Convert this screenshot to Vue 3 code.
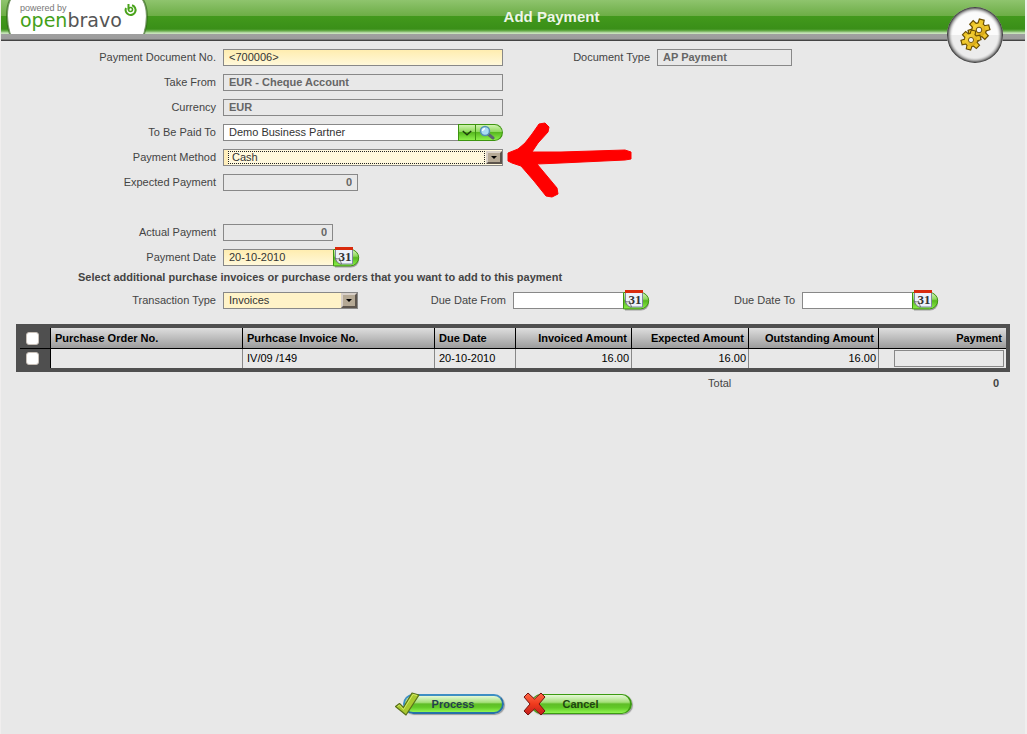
<script setup>
import { ref, computed } from "vue";

const payment = ref({
  documentNo: "<700006>",
  documentType: "AP Payment",
  takeFrom: "EUR - Cheque Account",
  currency: "EUR",
  paidTo: "Demo Business Partner",
  method: "Cash",
  expected: "0",
  actual: "0",
  date: "20-10-2010",
});

const filters = ref({
  type: "Invoices",
  dueFrom: "",
  dueTo: "",
});

const methods = ["Cash", "Cheque", "Wire Transfer"];
const types = ["Invoices", "Orders"];

const rows = ref([
  {
    id: 1,
    orderNo: "",
    invoiceNo: "IV/09 /149",
    dueDate: "20-10-2010",
    invoiced: "16.00",
    expected: "16.00",
    outstanding: "16.00",
    payment: "",
    selected: false,
  },
]);

// Sum of the amounts typed in the grid
const total = computed(() =>
  rows.value.reduce((sum, row) => sum + (Number(row.payment) || 0), 0)
);

const allSelected = computed({
  get: () => rows.value.every((row) => row.selected),
  set: (value) => rows.value.forEach((row) => (row.selected = value)),
});

// Teeth of the gear icon, as angles in degrees
const teeth = [0, 60, 120, 180, 240, 300];
</script>

<template>
  <form class="popup" @submit.prevent>
    <svg width="0" height="0" class="defs" aria-hidden="true">
      <defs>
        <linearGradient id="pill" x1="0" y1="0" x2="0" y2="1">
          <stop offset="0" stop-color="#d8f5bd" />
          <stop offset="0.4" stop-color="#8fd95c" />
          <stop offset="0.5" stop-color="#57b81f" />
          <stop offset="1" stop-color="#8cf04a" />
        </linearGradient>
        <symbol id="calendar" viewBox="0 0 27 21">
          <path d="M1 3.5h16a8 8 0 0 1 0 16H1z" fill="#555" opacity="0.5" transform="translate(1 1)" />
          <path d="M0.5 2.5h17a8.2 8.2 0 0 1 0 16.4h-17z" fill="url(#pill)" stroke="#3d9410" />
          <path d="M2.5 1h17v16h-12l-5-4z" fill="#edf1fa" stroke="#7d87a0" />
          <path d="M2.500 11c1 1 3 1 4 0l2 6c-3 0-5-2-6-6z" fill="#dfe5f2" stroke="#555" stroke-width="0.7" />
          <path d="M2 0h18v3H2z" fill="#d92a0c" />
          <text x="12" y="14" text-anchor="middle" class="calendar-day">31</text>
        </symbol>
      </defs>
    </svg>

    <!-- Title bar -->
    <header class="header">
      <div class="logo">
        <svg class="logo-shape" viewBox="0 0 142 34" width="142" height="34" aria-hidden="true">
          <path d="M4 0C0 8 0 22 4 34h134c4-12 4-26-1-34z" fill="#fff" stroke="#2c5d14" stroke-width="2" stroke-opacity="0.6" />
          <path d="M5 0C2 9 2 23 5 34h132c3-11 3-25-1-34z" fill="#fff" />
          <g fill="none" stroke="#4aa31c" stroke-width="2">
            <path d="M126 5.200A5 5 0 1 1 120 8" />
            <path d="M122.500 4v5.500" />
            <circle cx="124.500" cy="9.500" r="2" stroke-width="1.600" />
          </g>
        </svg>
        <span class="logo-powered">powered by</span>
        <span class="logo-name"><b>open</b>bravo</span>
      </div>
      <h1 class="title">Add Payment</h1>
      <div class="emblem">
        <svg viewBox="0 0 60 60" width="60" height="60" aria-hidden="true">
          <defs>
            <radialGradient id="rim">
              <stop offset="0.78" stop-color="#fff" stop-opacity="0" />
              <stop offset="0.9" stop-color="#999" stop-opacity="0.7" />
              <stop offset="1" stop-color="#222" />
            </radialGradient>
            <linearGradient id="gold" x1="0" y1="0" x2="1" y2="1">
              <stop offset="0" stop-color="#ffe34d" />
              <stop offset="1" stop-color="#d49d08" />
            </linearGradient>
            <g id="gear">
              <g fill="#e9bd1d" stroke="#6b5005" stroke-width="1.600">
                <path v-for="a in teeth" :key="a" d="M-2.600-6l.3-4.500h4.600l.3 4.500z" :transform="`rotate(${a + 15})`" />
                <circle r="7" />
              </g>
              <path v-for="a in teeth" :key="'f' + a" d="M-2.200-5l.3-5h3.800l.3 5z" fill="#edc528" :transform="`rotate(${a + 15})`" />
              <circle r="6.600" fill="url(#gold)" />
              <circle r="2.800" fill="#f4f4f4" stroke="#6b5005" />
            </g>
          </defs>
          <circle cx="30" cy="30" r="28" fill="#fbfbfb" />
          <path d="M2 30a28 28 0 0 0 56 0z" fill="#ececec" />
          <circle cx="30" cy="30" r="28" fill="url(#rim)" />
          <use href="#gear" transform="translate(34 25)" />
          <use href="#gear" transform="translate(26 35) scale(0.920)" />
        </svg>
      </div>
    </header>

    <!-- Payment data -->
    <div class="row">
      <label for="documentNo" class="label c1">Payment Document No.</label>
      <div class="field c2 wide">
        <input id="documentNo" v-model="payment.documentNo" type="text" class="input required" />
      </div>
      <label for="documentType" class="label c4">Document Type</label>
      <div class="field c5 medium">
        <input id="documentType" :value="payment.documentType" type="text" class="input readonly" readonly />
      </div>
    </div>
    <div class="row">
      <label for="takeFrom" class="label c1">Take From</label>
      <div class="field c2 wide">
        <input id="takeFrom" :value="payment.takeFrom" type="text" class="input readonly" readonly />
      </div>
    </div>
    <div class="row">
      <label for="currency" class="label c1">Currency</label>
      <div class="field c2 wide">
        <input id="currency" :value="payment.currency" type="text" class="input readonly" readonly />
      </div>
    </div>
    <div class="row">
      <label for="paidTo" class="label c1">To Be Paid To</label>
      <div class="field c2 wide">
        <input id="paidTo" v-model="payment.paidTo" type="text" class="input open" />
        <button type="button" class="lookup" aria-label="Show list">
          <svg viewBox="0 0 17 15" width="17" height="15">
            <path d="M4 6l4.500 4L13 6" fill="none" stroke="#1d3d0c" stroke-width="1.500" />
          </svg>
        </button>
        <button type="button" class="lookup last" aria-label="Search">
          <svg viewBox="0 0 26 15" width="26" height="15">
            <path d="M12 9l5 4" stroke="#5c6470" stroke-width="3" stroke-linecap="round" />
            <circle cx="9" cy="6" r="4.500" fill="#a9dcf5" stroke="#5590b5" stroke-width="1.500" />
            <path d="M6.500 6A3 3 0 0 1 9 3.500" fill="none" stroke="#fff" stroke-width="1.500" />
          </svg>
        </button>
      </div>
    </div>
    <div class="row">
      <label for="method" class="label c1">Payment Method</label>
      <div class="field c2 wide">
        <div class="select focused">
          <select id="method" v-model="payment.method">
            <option v-for="m in methods" :key="m">{{ m }}</option>
          </select>
          <span class="arrow"></span>
        </div>
        <svg class="pointer" viewBox="0 0 126 78" width="126" height="78" aria-hidden="true">
          <path
            d="M1 32L11 28 18 22 25 13 32 3 38 2 42 6 41 11 31 22 25 31 54 31 118 29 124 31 124 38 118 39 54 42 30 43 50 67 51 73 45 76 39 75 27 60 14 45 5 42 1 40z"
            fill="red"
            stroke="red"
            stroke-linejoin="round"
          />
        </svg>
      </div>
    </div>
    <div class="row">
      <label for="expected" class="label c1">Expected Payment</label>
      <div class="field c2 medium">
        <input id="expected" :value="payment.expected" type="text" class="input readonly number" readonly />
      </div>
    </div>
    <div class="row"></div>
    <div class="row">
      <label for="actual" class="label c1">Actual Payment</label>
      <div class="field c2 short">
        <input id="actual" :value="payment.actual" type="text" class="input readonly number" readonly />
      </div>
    </div>
    <div class="row">
      <label for="date" class="label c1">Payment Date</label>
      <div class="field c2 date">
        <input id="date" v-model="payment.date" type="text" class="input required open" />
        <button type="button" class="calendar" aria-label="Calendar">
          <svg width="27" height="21"><use href="#calendar" /></svg>
        </button>
      </div>
    </div>

    <!-- Filters -->
    <p class="note">Select additional purchase invoices or purchase orders that you want to add to this payment</p>
    <div class="row">
      <label for="type" class="label c1">Transaction Type</label>
      <div class="field c2 medium">
        <div class="select">
          <select id="type" v-model="filters.type">
            <option v-for="t in types" :key="t">{{ t }}</option>
          </select>
          <span class="arrow"></span>
        </div>
      </div>
      <label for="dueFrom" class="label c3">Due Date From</label>
      <div class="field c4 date">
        <input id="dueFrom" v-model="filters.dueFrom" type="text" class="input open" />
        <button type="button" class="calendar" aria-label="Calendar">
          <svg width="27" height="21"><use href="#calendar" /></svg>
        </button>
      </div>
      <label for="dueTo" class="label c5">Due Date To</label>
      <div class="field c6 date">
        <input id="dueTo" v-model="filters.dueTo" type="text" class="input open" />
        <button type="button" class="calendar" aria-label="Calendar">
          <svg width="27" height="21"><use href="#calendar" /></svg>
        </button>
      </div>
    </div>

    <!-- Grid -->
    <div class="grid">
      <table class="table">
        <colgroup>
          <col class="w-check" />
          <col class="w-number" />
          <col class="w-number" />
          <col class="w-date" />
          <col class="w-invoiced" />
          <col class="w-expected" />
          <col class="w-outstanding" />
          <col class="w-payment" />
        </colgroup>
        <thead>
          <tr>
            <th class="check"><input v-model="allSelected" type="checkbox" aria-label="Select all" /></th>
            <th>Purchase Order No.</th>
            <th>Purhcase Invoice No.</th>
            <th>Due Date</th>
            <th class="amount">Invoiced Amount</th>
            <th class="amount">Expected Amount</th>
            <th class="amount">Outstanding Amount</th>
            <th class="amount">Payment</th>
          </tr>
        </thead>
        <tbody>
          <tr v-for="row in rows" :key="row.id">
            <td class="check"><input v-model="row.selected" type="checkbox" aria-label="Select row" /></td>
            <td class="first">{{ row.orderNo }}</td>
            <td>{{ row.invoiceNo }}</td>
            <td>{{ row.dueDate }}</td>
            <td class="amount">{{ row.invoiced }}</td>
            <td class="amount">{{ row.expected }}</td>
            <td class="amount">{{ row.outstanding }}</td>
            <td class="amount">
              <input v-model="row.payment" type="text" class="input readonly number cell" aria-label="Payment" :disabled="!row.selected" />
            </td>
          </tr>
        </tbody>
      </table>
      <div class="total">
        <span>Total</span>
        <strong>{{ total }}</strong>
      </div>
    </div>

    <!-- Actions -->
    <footer class="footer">
      <button type="submit" class="action process">
        <span class="pill">Process</span>
        <svg class="action-icon" viewBox="0 0 25 24" width="25" height="24" aria-hidden="true">
          <path d="M0.500 14.500l4-3 4 4L17 1l7 2L11 23z" fill="#a9c92f" stroke="#59701a" stroke-width="1.200" stroke-linejoin="round" />
          <path d="M2.500 14.500l2-1.500 4 4.500L18 2.500l4 1" fill="none" stroke="#d3ea68" />
        </svg>
      </button>
      <button type="button" class="action cancel">
        <span class="pill">Cancel</span>
        <svg class="action-icon" viewBox="0 0 25 24" width="25" height="24" aria-hidden="true">
          <defs>
            <linearGradient id="cross" x1="0" y1="0" x2="0" y2="1">
              <stop offset="0" stop-color="#ff6a4a" />
              <stop offset="0.5" stop-color="#f03a1c" />
              <stop offset="1" stop-color="#c01c1c" />
            </linearGradient>
          </defs>
          <path d="M1 5l4-4 6.500 6L18 1l4 4-6 7 6 7-4 4-6.500-6L5 23l-4-4 6-7z" fill="url(#cross)" stroke="#701410" stroke-linejoin="round" />
        </svg>
      </button>
    </footer>
  </form>
</template>

<style scoped>
/* Popup */
.popup {
  display: flex;
  flex-direction: column;
  min-height: 100vh;
  box-sizing: border-box;
  border-left: 1px solid #f0eeee;
  border-right: 2px solid #f0eeee;
  background-color: #e8e8e8;
  color: #444;
  font-family: "Liberation Sans", Arial, sans-serif;
  font-size: 11px;
  line-height: 15px;
}

.defs {
  position: absolute;
}

/* Title bar */
.header {
  position: relative;
  display: flex;
  height: 41px;
  margin-bottom: 4px;
  background: linear-gradient(
    #8fc46e 0,
    #6cad45 16px,
    #42991c 16px,
    #3a8f18 29px,
    #6cae50 31px,
    #c6e2b8 33px,
    #c6e2b8 34px,
    #a0a0a0 34px,
    #9c9c9c 39px,
    #777 39px,
    #777 40px,
    #444 40px,
    #444 41px
  );
}

.logo {
  position: relative;
  display: flex;
  flex-direction: column;
  flex: none;
  width: 128px;
  padding: 3px 0 0 19px;
}

.logo-shape {
  position: absolute;
  top: 0;
  left: 5px;
}

.logo-powered {
  position: relative;
  color: #777;
  font-size: 9px;
  line-height: 10px;
}

.logo-name {
  position: relative;
  color: #555;
  font-family: "DejaVu Sans", sans-serif;
  font-size: 19px;
  line-height: 15px;
}

.logo-name b {
  color: #43a018;
  font-weight: normal;
}

.title {
  flex: 1;
  margin: 0 70px 0 0;
  color: #eef5e8;
  font-size: 15px;
  line-height: 34px;
  text-align: center;
}

.emblem {
  position: absolute;
  top: 5px;
  right: 20px;
  height: 60px;
}

/* Form rows */
.row {
  display: grid;
  grid-template-columns:
    minmax(0, 222fr) minmax(0, 145fr) minmax(0, 145fr)
    minmax(0, 144fr) minmax(0, 145fr) minmax(0, 223fr);
  align-items: center;
  height: 25px;
}

.c1 {
  grid-column: 1;
}

.c2 {
  grid-column: 2;
}

.c3 {
  grid-column: 3;
}

.c4 {
  grid-column: 4;
}

.c5 {
  grid-column: 5;
}

.c6 {
  grid-column: 6;
}

.label {
  padding-right: 7px;
  text-align: right;
  white-space: nowrap;
}

.field {
  position: relative;
  display: flex;
  align-items: center;
  height: 17px;
}

.wide {
  grid-column: 2 / 4;
  margin-right: 10px;
}

.medium {
  margin-right: 10px;
}

.short {
  margin-right: 35px;
}

.date {
  max-width: 137px;
}

.input {
  flex: 1;
  min-width: 0;
  height: 17px;
  box-sizing: border-box;
  padding: 0 5px 1px;
  border: 1px solid #888;
  background-color: #fff;
  color: #333;
  font: inherit;
  line-height: 14px;
  outline: none;
}

.input.required {
  background: linear-gradient(#ffedb0, #fff8da);
}

.input.readonly {
  background-color: transparent;
  color: #666;
  font-weight: bold;
}

.input.number {
  text-align: right;
}

.input.open {
  border-right: none;
}

.lookup {
  display: flex;
  flex: none;
  height: 17px;
  padding: 0;
  border: 1px solid #3d9410;
  background: linear-gradient(#d0f3b0, #8fd95c 45%, #57b81f 50%, #8cf04a);
  cursor: pointer;
}

.lookup:first-of-type {
  width: 18px;
}

.lookup.last {
  width: 27px;
  border-left: none;
  border-radius: 0 9px 9px 0;
}

.calendar {
  display: flex;
  flex: none;
  width: 27px;
  padding: 0;
  border: none;
  background: none;
  cursor: pointer;
}

.calendar-day {
  fill: #333;
  font-family: "Liberation Serif", serif;
  font-size: 13px;
  font-weight: bold;
}

/* Drop-downs */
.select {
  position: relative;
  flex: 1;
  height: 17px;
  box-sizing: border-box;
  border: 1px solid #888;
  background-color: #fff3c8;
}

.select select {
  display: block;
  width: 100%;
  height: 15px;
  padding: 0 18px 0 5px;
  border: none;
  background: none;
  color: #333;
  font: inherit;
  appearance: none;
  outline: none;
}

.select.focused {
  padding: 1px 17px 1px 4px;
  background: linear-gradient(90deg, #ffeebb 4px, #fff8dc 4px);
}

.select.focused select {
  height: 13px;
  padding: 0 0 0 3px;
  border: 1px dotted #222;
  line-height: 11px;
}

.arrow {
  position: absolute;
  top: 0;
  right: 0;
  width: 16px;
  height: 15px;
  box-sizing: border-box;
  border: 2px solid;
  border-color: #d8d0c8 #5c544c #5c544c #d8d0c8;
  background-color: #b5a995;
  pointer-events: none;
}

.focused .arrow {
  top: 1px;
  height: 13px;
}

.arrow::after {
  content: "";
  position: absolute;
  top: 50%;
  left: 50%;
  margin: -2px 0 0 -3px;
  border: 3px solid transparent;
  border-top-color: #000;
  border-bottom: none;
}

/* Red mark beside the payment method */
.pointer {
  position: absolute;
  top: -28px;
  left: 100%;
  margin-left: 4px;
  z-index: 1;
  pointer-events: none;
}

.note {
  margin: 0 0 3px 77px;
  font-weight: bold;
}

/* Grid */
.grid {
  margin: 11px 15px 0;
  padding-right: 1px;
}

.table {
  width: 100%;
  table-layout: fixed;
  border: 4px solid #4f4f4f;
  border-collapse: separate;
  border-spacing: 0;
  color: #000;
}

.w-check {
  width: 30px;
}

.w-number {
  width: 192px;
}

.w-date {
  width: 81px;
}

.w-invoiced {
  width: 116px;
}

.w-expected {
  width: 117px;
}

.w-outstanding {
  width: 130px;
}

.w-payment {
  width: 128px;
}

.table th,
.table td {
  box-sizing: border-box;
  padding: 0 2px 0 4px;
  border-left: 1px solid #888;
  text-align: left;
  white-space: nowrap;
}

.table th {
  height: 21px;
  padding-right: 4px;
  border-left-color: #000;
  border-bottom: 1px solid #000;
  background: linear-gradient(#dedede, #9c9c9c);
}

.table td {
  height: 19px;
}

.table td.first {
  border-left-color: #000;
}

.table .amount {
  text-align: right;
}

.table .check {
  padding: 0 0 0 6px;
  border-left: none;
  background: #4f4f4f;
}

.check input {
  display: block;
  width: 13px;
  height: 13px;
  margin: 0;
  border: 1px solid #c8c0b8;
  border-radius: 3px;
  background-color: #fff;
  appearance: none;
}

.check input:checked {
  background-color: #57b81f;
}

.cell {
  display: block;
  width: 110px;
  margin-left: auto;
}

.total {
  display: grid;
  grid-template-columns: 716fr 268fr 10fr;
  padding-top: 4px;
  text-align: right;
}

/* Actions */
.footer {
  display: flex;
  justify-content: center;
  gap: 19px;
  margin-top: auto;
  padding: 18px 0;
}

.action {
  position: relative;
  display: flex;
  align-items: center;
  width: 109px;
  height: 24px;
  padding: 0 0 0 8px;
  border: none;
  background: none;
  font: inherit;
  font-weight: bold;
  cursor: pointer;
}

.pill {
  flex: 1;
  height: 20px;
  box-sizing: border-box;
  border: 2px solid #3c9a12;
  border-radius: 10px;
  background: linear-gradient(#e6f8d8, #a5e07a 40%, #5fbd28 50%, #62c928 70%, #90f550);
  box-shadow: 1px 1px 1px #999;
  color: #1f4510;
  line-height: 17px;
  text-align: center;
}

.process .pill {
  border-color: #3e8fc4 #2670a8 #2670a8 #3e8fc4;
  color: #24404c;
}

.cancel .pill {
  border-width: 1px 2px 1px 1px;
  line-height: 18px;
}

.action-icon {
  position: absolute;
  top: 0;
  left: 0;
}
</style>

<style>
body {
  margin: 0;
}
</style>
